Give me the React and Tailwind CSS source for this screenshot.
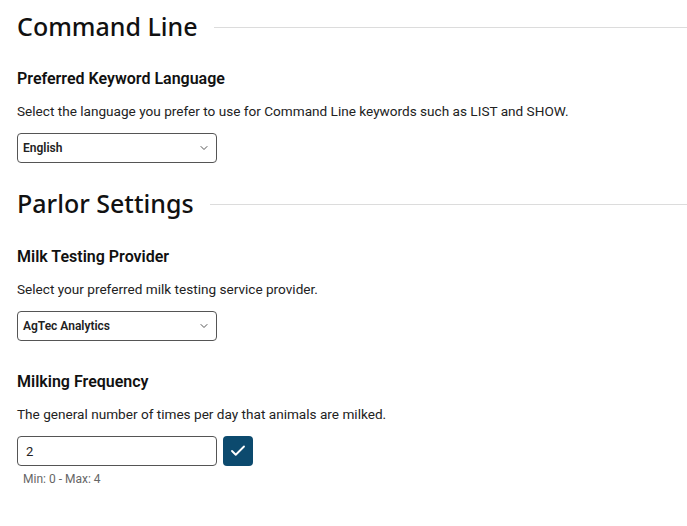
import { ChevronDown, Check } from "lucide-react";

function Section({ title, children }) {
  return (
    <section>
      <div className="flex items-center gap-4 h-[38px]">
        <h2 className="text-[25px] font-medium text-[#111] whitespace-nowrap" style={{ fontFamily: "'Noto Sans', sans-serif" }}>
          {title}
        </h2>
        <div className="flex-1 h-px bg-[#dcdcdc]" />
      </div>
      {children}
    </section>
  );
}

function Field({ label, help, className, children }) {
  return (
    <div className={className}>
      <h3 className="text-[16px] font-semibold text-[#111] leading-[22px]">{label}</h3>
      <p className="mt-[11px] text-[13.6px] text-[#222] leading-[20px]">{help}</p>
      <div className="mt-[12px]">{children}</div>
    </div>
  );
}

function Select({ value }) {
  return (
    <div className="w-[200px] h-[30px] border border-[#555] rounded-[4px] flex items-center justify-between pl-[5px] pr-[6px]">
      <span className="text-[12px] font-semibold text-[#222]">{value}</span>
      <ChevronDown size={12} strokeWidth={2} className="text-[#555]" />
    </div>
  );
}

export default function App() {
  return (
    <div className="bg-white w-[687px] h-[526px] pl-[17px] pt-[8px]" style={{ fontFamily: "Roboto, 'Liberation Sans', sans-serif" }}>
      <Section title="Command Line">
        <Field
          className="pt-[22px]"
          label="Preferred Keyword Language"
          help="Select the language you prefer to use for Command Line keywords such as LIST and SHOW."
        >
          <Select value="English" />
        </Field>
      </Section>
      <div className="h-[22px]" />
      <Section title="Parlor Settings">
        <Field className="pt-[23px]" label="Milk Testing Provider" help="Select your preferred milk testing service provider.">
          <Select value="AgTec Analytics" />
        </Field>
        <Field className="pt-[30px]" label="Milking Frequency" help="The general number of times per day that animals are milked.">
          <div className="flex items-center gap-[6px]">
            <input
              defaultValue="2"
              className="w-[200px] h-[30px] border border-[#555] rounded-[4px] px-[8px] text-[13px] text-[#222] outline-none"
            />
            <button className="w-[30px] h-[30px] rounded-[4px] bg-[#0c4a6e] flex items-center justify-center text-white">
              <Check size={18} strokeWidth={2.5} />
            </button>
          </div>
          <p className="mt-[4px] ml-[6px] text-[12px] text-[#666]">Min: 0 - Max: 4</p>
        </Field>
      </Section>
    </div>
  );
}
